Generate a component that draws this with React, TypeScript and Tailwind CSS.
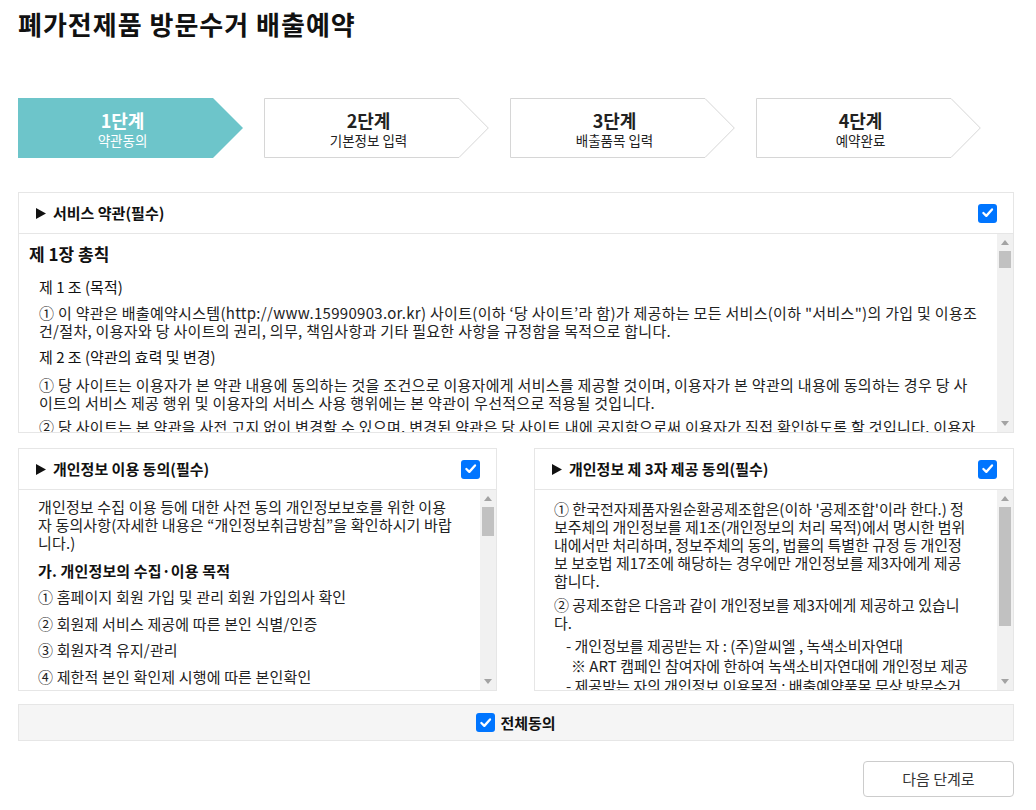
import React from "react";

function Check({ size = 19 }: { size?: number }) {
  return (
    <div
      className="flex items-center justify-center rounded-[3px] bg-[#0075ff] shrink-0"
      style={{ width: size, height: size }}
    >
      <svg width={size * 0.7} height={size * 0.7} viewBox="0 0 14 14">
        <path d="M2.5 7.4 L5.6 10.4 L11.6 3.6" fill="none" stroke="#fff" strokeWidth="2.4" strokeLinecap="round" strokeLinejoin="round" />
      </svg>
    </div>
  );
}

function Tri() {
  return (
    <svg width="10" height="11" viewBox="0 0 10 11" className="shrink-0">
      <polygon points="0,0 10,5.5 0,11" fill="#111" />
    </svg>
  );
}

function FakeScroll({ thumbH }: { thumbH: number }) {
  return (
    <div className="w-[16px] h-full bg-[#f1f1f1] flex flex-col shrink-0">
      <div className="h-[17px] flex items-center justify-center">
        <svg width="8" height="5" viewBox="0 0 8 5">
          <polygon points="0,5 4,0 8,5" fill="#a3a3a3" />
        </svg>
      </div>
      <div className="mx-[2px] bg-[#c1c1c1]" style={{ height: thumbH }} />
      <div className="flex-1" />
      <div className="h-[17px] flex items-center justify-center">
        <svg width="8" height="5" viewBox="0 0 8 5">
          <polygon points="0,0 8,0 4,5" fill="#a3a3a3" />
        </svg>
      </div>
    </div>
  );
}

function Step({ n, label, active }: { n: number; label: string; active?: boolean }) {
  return (
    <div className="relative w-[225px] h-[60px] shrink-0">
      <svg className="absolute inset-0" width="225" height="60" viewBox="0 0 225 60">
        {active ? (
          <polygon points="0,0 195,0 225,30 195,60 0,60" fill="#6dc5ca" />
        ) : (
          <polygon points="0.5,0.5 195,0.5 224.3,30 195,59.5 0.5,59.5" fill="#fff" stroke="#d6d6d6" strokeWidth="1" />
        )}
      </svg>
      <div
        className={
          "relative h-full flex flex-col items-center justify-center pt-[2px] pr-[16px] " +
          (active ? "text-white" : "text-[#222]")
        }
      >
        <div className="text-[18px] font-bold leading-[22px]">{n}단계</div>
        <div className="text-[13.5px] leading-[18px]">{label}</div>
      </div>
    </div>
  );
}

function BoxHeader({ title }: { title: string }) {
  return (
    <div className="h-[41px] border-b border-[#e6e6e6] flex items-center justify-between pl-[17px] pr-[16px]">
      <div className="flex items-center gap-[7px] text-[15px] font-bold text-[#111] leading-[20px]">
        <Tri />
        <span>{title}</span>
      </div>
      <Check />
    </div>
  );
}

export default function App() {
  return (
    <div className="w-[1036px] min-h-[810px] bg-white font-['Noto_Sans_CJK_KR','Noto_Sans',sans-serif] text-[#333]">
      <div className="pl-[18px] pr-[22px] flex flex-col">
        <h1 className="pt-[6px] text-[26px] font-bold leading-[36px] text-[#111] tracking-[1px]">
          폐가전제품 방문수거 배출예약
        </h1>

        <div className="mt-[56px] flex gap-[21px]">
          <Step n={1} label="약관동의" active />
          <Step n={2} label="기본정보 입력" />
          <Step n={3} label="배출품목 입력" />
          <Step n={4} label="예약완료" />
        </div>

        <div className="mt-[34px] border border-[#e6e6e6]">
          <BoxHeader title="서비스 약관(필수)" />
          <div className="h-[198px] flex">
            <div className="flex-1 overflow-hidden pt-[8px] pl-[10px] whitespace-nowrap">
              <div className="text-[17px] font-bold leading-[24px] text-[#111]">제 1장 총칙</div>
              <div className="pl-[10px]">
                <div className="mt-[10px] text-[15px] leading-[22px] text-[#111]">제 1 조 (목적)</div>
                <div className="mt-[6px] text-[15px] leading-[18px] tracking-[0.3px] text-[#222]">
                  <div>① 이 약관은 배출예약시스템(http://www.15990903.or.kr) 사이트(이하 ‘당 사이트’라 함)가 제공하는 모든 서비스(이하 "서비스")의 가입 및 이용조</div>
                  <div>건/절차, 이용자와 당 사이트의 권리, 의무, 책임사항과 기타 필요한 사항을 규정함을 목적으로 합니다.</div>
                </div>
                <div className="mt-[6px] text-[15px] leading-[22px] text-[#111]">제 2 조 (약관의 효력 및 변경)</div>
                <div className="mt-[8px] text-[15px] leading-[18px] tracking-[0.3px] text-[#222]">
                  <div>① 당 사이트는 이용자가 본 약관 내용에 동의하는 것을 조건으로 이용자에게 서비스를 제공할 것이며, 이용자가 본 약관의 내용에 동의하는 경우 당 사</div>
                  <div>이트의 서비스 제공 행위 및 이용자의 서비스 사용 행위에는 본 약관이 우선적으로 적용될 것입니다.</div>
                </div>
                <div className="mt-[6px] text-[15px] leading-[18px] tracking-[0.3px] text-[#222]">
                  <div>② 당 사이트는 본 약관을 사전 고지 없이 변경할 수 있으며, 변경된 약관은 당 사이트 내에 공지함으로써 이용자가 직접 확인하도록 할 것입니다. 이용자</div>
                </div>
              </div>
            </div>
            <FakeScroll thumbH={17} />
          </div>
        </div>

        <div className="mt-[15px] grid grid-cols-[479px_480px] gap-[37px]">
          <div className="border border-[#e6e6e6]">
            <BoxHeader title="개인정보 이용 동의(필수)" />
            <div className="h-[200px] flex">
              <div className="flex-1 overflow-hidden pt-[8px] pl-[19px] whitespace-nowrap text-[15px] tracking-[0.15px] text-[#222]">
                <div className="leading-[18px]">
                  <div>개인정보 수집 이용 등에 대한 사전 동의 개인정보보호를 위한 이용</div>
                  <div>자 동의사항(자세한 내용은 “개인정보취급방침”을 확인하시기 바랍</div>
                  <div>니다.)</div>
                </div>
                <div className="mt-[8px] leading-[22px] font-bold text-[#111]">가. 개인정보의 수집·이용 목적</div>
                <div className="mt-[2px] leading-[26.5px]">
                  <div>① 홈페이지 회원 가입 및 관리 회원 가입의사 확인</div>
                  <div>② 회원제 서비스 제공에 따른 본인 식별/인증</div>
                  <div>③ 회원자격 유지/관리</div>
                  <div>④ 제한적 본인 확인제 시행에 따른 본인확인</div>
                </div>
              </div>
              <FakeScroll thumbH={29} />
            </div>
          </div>

          <div className="border border-[#e6e6e6]">
            <BoxHeader title="개인정보 제 3자 제공 동의(필수)" />
            <div className="h-[200px] flex">
              <div className="flex-1 overflow-hidden pt-[10px] pl-[19px] whitespace-nowrap text-[15px] text-[#222] leading-[18px]">
                <div>
                  <div>① 한국전자제품자원순환공제조합은(이하 '공제조합'이라 한다.) 정</div>
                  <div>보주체의 개인정보를 제1조(개인정보의 처리 목적)에서 명시한 범위</div>
                  <div>내에서만 처리하며, 정보주체의 동의, 법률의 특별한 규정 등 개인정</div>
                  <div>보 보호법 제17조에 해당하는 경우에만 개인정보를 제3자에게 제공</div>
                  <div>합니다.</div>
                </div>
                <div className="mt-[6px]">
                  <div>② 공제조합은 다음과 같이 개인정보를 제3자에게 제공하고 있습니</div>
                  <div>다.</div>
                </div>
                <div className="mt-[4px] pl-[12px] leading-[20px]">
                  <div>- 개인정보를 제공받는 자 : (주)알씨엘 , 녹색소비자연대</div>
                  <div className="pl-[5px]">※ ART 캠페인 참여자에 한하여 녹색소비자연대에 개인정보 제공</div>
                  <div>- 제공받는 자의 개인정보 이용목적 : 배출예약품목 무상 방문수거</div>
                </div>
              </div>
              <FakeScroll thumbH={119} />
            </div>
          </div>
        </div>

        <div className="mt-[13px] h-[37px] border border-[#e6e6e6] bg-[#f5f5f5] flex items-center justify-center gap-[5px]">
          <Check />
          <span className="text-[15px] font-bold text-[#111] leading-[20px]">전체동의</span>
        </div>

        <div className="mt-[20px] flex justify-end">
          <button className="w-[151px] h-[36px] border border-[#cccccc] rounded-[4px] bg-white text-[15px] text-[#333] leading-[20px]">
            다음 단계로
          </button>
        </div>
      </div>
    </div>
  );
}
